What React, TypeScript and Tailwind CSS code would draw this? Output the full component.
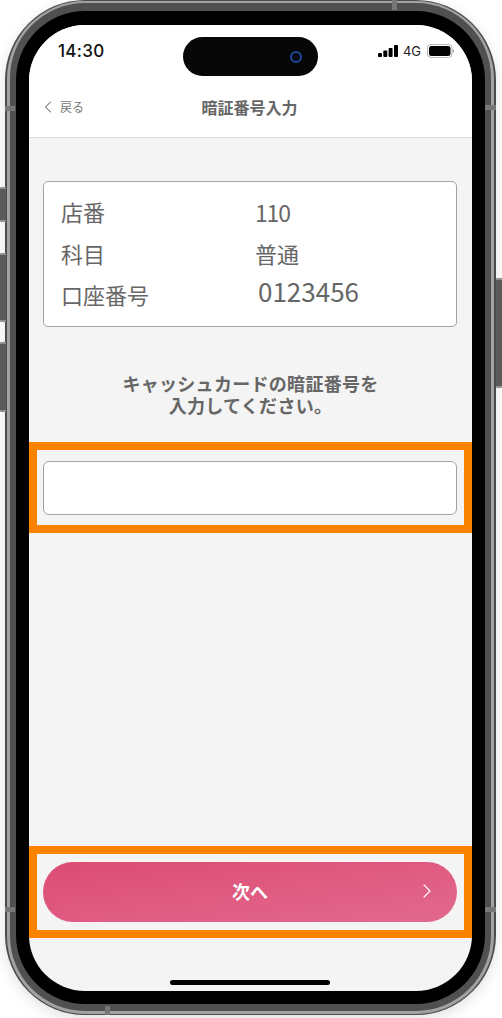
import { ChevronLeft, ChevronRight } from "lucide-react";

const cjk = "font-['Noto_Sans_CJK_JP','Noto_Sans',sans-serif]";

function SideButton({ className }: { className: string }) {
  return <div className={`absolute w-[6px] rounded-[1px] border-y-2 border-[#8f8f8f] bg-[#5a5a5a] ${className}`} />;
}

function Tick({ className }: { className: string }) {
  return <div className={`absolute bg-[#777777] ${className}`} />;
}

function StatusBar() {
  return (
    <div className="flex h-[52px] items-center justify-between pl-[29px] pr-[18px]">
      <span className="text-[17px] leading-[20px] font-medium tracking-[0.3px] text-[#111111] font-['Inter',sans-serif]">
        14:30
      </span>
      <div className="flex items-center gap-[5px]">
        <svg width="20" height="12" viewBox="0 0 20 12" fill="#000">
          <rect x="0" y="8" width="4" height="4" rx="1" />
          <rect x="5.3" y="5.5" width="4" height="6.5" rx="1" />
          <rect x="10.6" y="3" width="4" height="9" rx="1" />
          <rect x="16" y="0" width="4" height="12" rx="1" />
        </svg>
        <span className="text-[13px] leading-[14px] text-[#222222] font-['Inter',sans-serif]">4G</span>
        <svg width="27" height="14" viewBox="0 0 27 14" className="ml-[1px]">
          <rect x="0.5" y="0.5" width="24.5" height="13" rx="3.5" fill="none" stroke="#b5b5b5" />
          <rect x="2" y="2" width="21.5" height="10" rx="2.5" fill="#000" />
          <path d="M25.8 5.5 L27 6.2 V7.8 L25.8 8.5 Z" fill="#999" />
        </svg>
      </div>
    </div>
  );
}

function InfoRow({ label, value, className, valueClass }: { label: string; value: string; className?: string; valueClass?: string }) {
  return (
    <div className={`flex h-[42px] items-center text-[22px] text-[#666666] ${className ?? ""}`}>
      <span className="w-[195px]">{label}</span>
      <span className={valueClass}>{value}</span>
    </div>
  );
}

export default function App() {
  return (
    <div className={`relative h-[1018px] w-[502px] overflow-hidden bg-white ${cjk}`}>
      <SideButton className="left-0 top-[187px] h-[35px]" />
      <SideButton className="left-0 top-[253px] h-[69px]" />
      <SideButton className="left-0 top-[342px] h-[70px]" />
      <SideButton className="right-0 top-[278px] h-[110px]" />

      <div className="ml-[5px] w-[491px] rounded-[80px] bg-[#4c4c4c] p-[1px_2px] shadow-[0_4px_14px_rgba(0,0,0,0.12)]">
        <div className="rounded-[78px] bg-[#a2a2a2] px-[3px] pt-[2px] pb-[3px]">
          <div className="rounded-[75px] bg-[#505050] px-[6px] pt-[8px] pb-[7px]">
            <div className="rounded-[69px] bg-black px-[13px] pt-[14px] pb-[13px]">
              <div className="relative flex h-[966px] w-[443px] flex-col overflow-hidden rounded-[56px] bg-[#f4f4f4]">
                {/* dynamic island */}
                <div className="absolute left-[154px] top-[12px] flex h-[39px] w-[135px] items-center justify-end rounded-full bg-[#070707] pr-[16px]">
                  <div className="h-[12px] w-[12px] rounded-full border-2 border-[#1c4a9c] bg-[#0a0a14]" />
                </div>

                <header className="h-[113px] border-b border-[#dcdcdc] bg-white">
                  <StatusBar />
                  <div className="relative flex h-[60px] items-center justify-center pr-[2px]">
                    <div className="absolute left-[9px] flex items-center gap-[2px] text-[#6e6e6e]">
                      <ChevronLeft size={20} strokeWidth={1.25} />
                      <span className="text-[12px] leading-none text-[#777777]">戻る</span>
                    </div>
                    <h1 className="text-[16px] font-bold leading-none text-[#666666]">暗証番号入力</h1>
                  </div>
                </header>

                <main className="flex flex-1 flex-col">
                  <div className="ml-[14px] mr-[15px] mt-[43px] h-[146px] rounded-[5px] border border-[#a3a3a3] bg-white pl-[17px] pt-[8px]">
                    <InfoRow label="店番" value="110" valueClass="-ml-[1px] mt-[2px] text-[23px] tracking-[-1.2px]" />
                    <InfoRow label="科目" value="普通" valueClass="-ml-[1px]" />
                    <InfoRow label="口座番号" value="0123456" className="-mt-[1px]" valueClass="ml-[2px] -mt-[7px] text-[26px]" />
                  </div>

                  <p className="mt-[45px] text-center text-[18px] font-bold leading-[22px] tracking-[0.3px] text-[#666666]">
                    キャッシュカードの暗証番号を
                    <br />
                    入力してください。
                  </p>

                  <div className="mt-[26px] border-[8px] border-[#f98200] pl-[6px] pr-[7px] pt-[11px] pb-[10px]">
                    <div className="h-[54px] rounded-[6px] border border-[#a3a3a3] bg-white" />
                  </div>

                  <div className="flex-1" />

                  <div className="border-[8px] border-[#f98200] pl-[6px] pr-[7px] py-[8px]">
                    <button className="relative flex h-[60px] w-full items-center justify-center rounded-full bg-gradient-to-br from-[#dc4b73] to-[#e3698f] pb-[2px] text-[18px] font-bold text-white">
                      次へ
                      <ChevronRight size={24} strokeWidth={1.1} className="absolute right-[18px]" />
                    </button>
                  </div>

                  <div className="flex h-[53px] justify-center pt-[42px] pr-[2px]">
                    <div className="h-[5px] w-[160px] rounded-full bg-black" />
                  </div>
                </main>
              </div>
            </div>
          </div>
        </div>

        {/* antenna bands */}
        <Tick className="left-[5px] top-[106px] h-[5px] w-[10px]" />
        <Tick className="right-[6px] top-[105px] h-[5px] w-[11px]" />
        <Tick className="left-[5px] top-[907px] h-[5px] w-[10px]" />
        <Tick className="right-[6px] top-[907px] h-[5px] w-[11px]" />
        <Tick className="left-[105px] top-[1006px] h-[9px] w-[5px]" />
        <Tick className="left-[392px] top-0 h-[10px] w-[5px]" />
      </div>
    </div>
  );
}
